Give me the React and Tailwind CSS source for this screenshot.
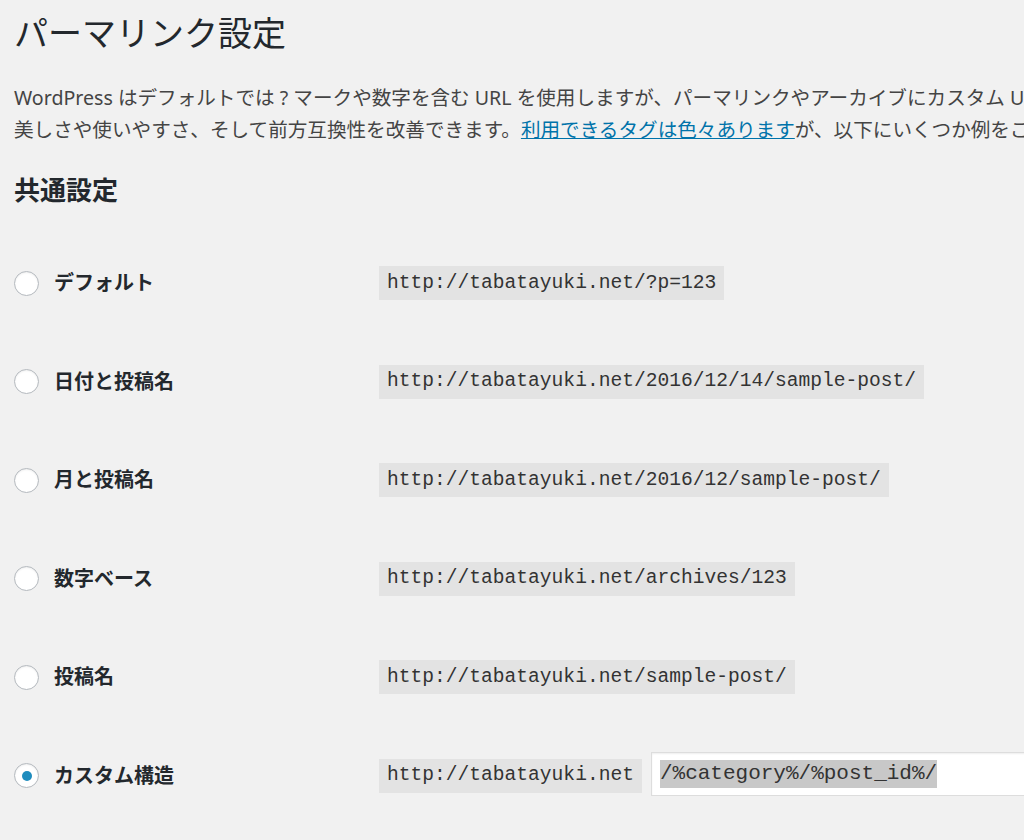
const rows = [
  { label: 'デフォルト', url: 'http://tabatayuki.net/?p=123' },
  { label: '日付と投稿名', url: 'http://tabatayuki.net/2016/12/14/sample-post/' },
  { label: '月と投稿名', url: 'http://tabatayuki.net/2016/12/sample-post/' },
  { label: '数字ベース', url: 'http://tabatayuki.net/archives/123' },
  { label: '投稿名', url: 'http://tabatayuki.net/sample-post/' },
];

const Radio = ({ checked }) => (
  <span className="flex h-[25px] w-[25px] shrink-0 items-center justify-center rounded-full border border-[#b4b9be] bg-white shadow-[inset_0_1px_2px_rgba(0,0,0,0.07)]">
    {checked && <span className="h-[10px] w-[10px] rounded-full bg-[#1e8cbe]" />}
  </span>
);

const Code = ({ children }) => (
  <code className="flex h-[34px] shrink-0 items-center bg-[#e3e3e3] px-[8px] font-['Liberation_Mono',monospace] text-[19.6px] text-[#333] whitespace-nowrap">
    {children}
  </code>
);

const Label = ({ checked, children }) => (
  <div className="flex w-[365px] shrink-0 items-center gap-[15px]">
    <Radio checked={checked} />
    <span className="text-[20px] font-semibold text-[#23282d]">{children}</span>
  </div>
);

export default function App() {
  return (
    <div className="h-[840px] w-[1024px] overflow-hidden bg-[#f1f1f1] pl-[14px] font-['Noto_Sans','Noto_Sans_CJK_JP',sans-serif] text-[#444]">
      <h1 className="mt-[13px] text-[34px] leading-[40px] font-normal text-[#23282d] whitespace-nowrap">
        パーマリンク設定
      </h1>

      <p className="mt-[29px] text-[19.6px] leading-[32px] whitespace-nowrap">
        WordPress はデフォルトでは ? マークや数字を含む URL を使用しますが、パーマリンクやアーカイブにカスタム URL 構造を作成することもできます。これにより、リンクの
        <br />
        美しさや使いやすさ、そして前方互換性を改善できます。
        <a href="#" className="text-[#0073aa] underline">利用できるタグは色々あります</a>
        が、以下にいくつか例をご紹介します。
      </p>

      <h2 className="mt-[26px] text-[26px] leading-[36px] font-semibold text-[#23282d]">共通設定</h2>

      <div className="mt-[26px]">
        {rows.map((r) => (
          <div key={r.label} className="flex h-[98.5px] items-center">
            <Label>{r.label}</Label>
            <Code>{r.url}</Code>
          </div>
        ))}
        <div className="flex h-[98.5px] items-center">
          <Label checked>カスタム構造</Label>
          <Code>http://tabatayuki.net</Code>
          <div className="ml-[9px] -mt-[4px] flex h-[44px] w-[500px] shrink-0 items-center border border-[#ddd] bg-white pl-[8px] shadow-[inset_0_1px_2px_rgba(0,0,0,0.07)]">
            <span className="bg-[#c8c8c8] py-[3px] font-['Liberation_Mono',monospace] text-[21px] leading-[22px] text-[#333]">
              /%category%/%post_id%/
            </span>
          </div>
        </div>
      </div>
    </div>
  );
}
